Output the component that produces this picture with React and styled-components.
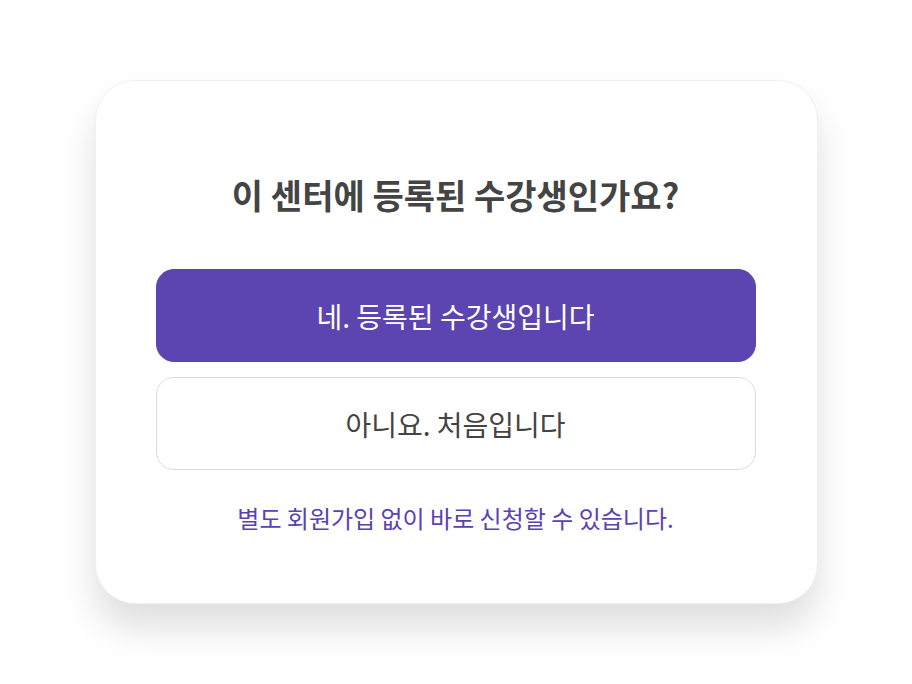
import React from "react";
import styled, { createGlobalStyle } from "styled-components";

const GlobalStyle = createGlobalStyle`
    html, body {
        margin: 0;
        padding: 0;
        background: #ffffff;
    }
    body {
        font-family: "Noto Sans CJK KR", "Noto Sans", sans-serif;
    }
`;

const Page = styled.div`
    width: 912px;
    height: 684px;
    display: flex;
    align-items: center;
    justify-content: center;
`;

const Card = styled.div`
    width: 723px;
    height: 524px;
    box-sizing: border-box;
    padding: 90px 61px 0 60px;
    background: #fff;
    border: 1px solid #f0f0f0;
    border-radius: 40px;
    box-shadow: 0 24px 36px rgba(0, 0, 0, 0.13);
    display: flex;
    flex-direction: column;
    align-items: stretch;
`;

const Title = styled.h2`
    margin: 0 0 50px;
    font-size: 34px;
    line-height: 48px;
    font-weight: 700;
    color: #444;
    text-align: center;
`;

const Choice = styled.button`
    height: 93px;
    width: 100%;
    box-sizing: border-box;
    border-radius: 18px;
    font-family: inherit;
    font-size: 28px;
    font-weight: 400;
    cursor: pointer;
    border: 1px solid ${(p) => (p.primary ? "#5d45b1" : "#dcdcdc")};
    background: ${(p) => (p.primary ? "#5d45b1" : "#fff")};
    color: ${(p) => (p.primary ? "#fff" : "#444")};
    margin-bottom: ${(p) => (p.primary ? "15px" : "0")};
`;

const Note = styled.p`
    margin: 31px 0 0;
    font-size: 24px;
    line-height: 34px;
    color: #5b41b4;
    text-align: center;
`;

const App = () => {
    return (
        <>
            <GlobalStyle />
            <Page>
                <Card>
                    <Title>이 센터에 등록된 수강생인가요?</Title>
                    <Choice primary>네. 등록된 수강생입니다</Choice>
                    <Choice>아니요. 처음입니다</Choice>
                    <Note>별도 회원가입 없이 바로 신청할 수 있습니다.</Note>
                </Card>
            </Page>
        </>
    );
};

export default App;
